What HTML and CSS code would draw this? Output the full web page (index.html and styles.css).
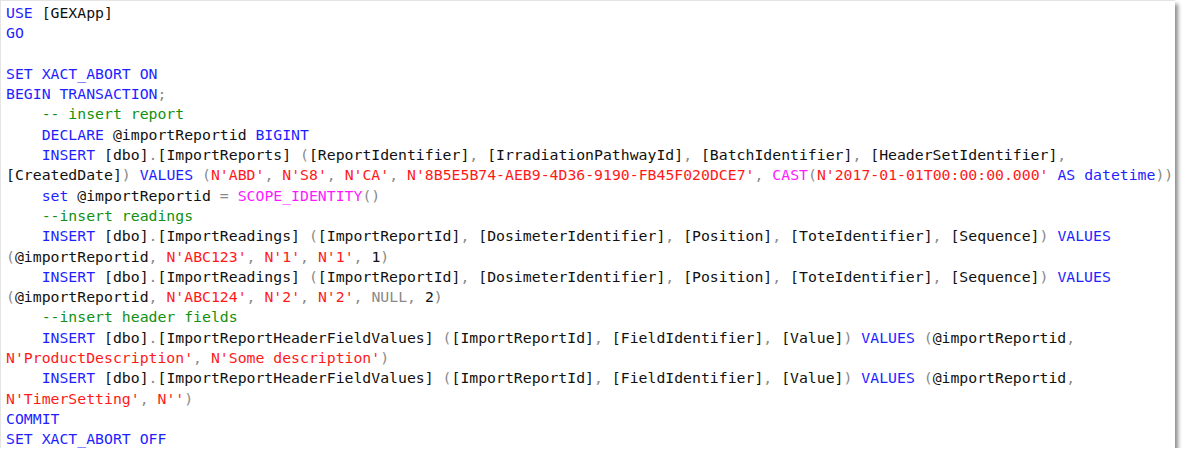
FILE: index.html
```html
<!DOCTYPE html>
<html>
<head>
<meta charset="utf-8">
<link rel="stylesheet" href="styles.css">
</head>
<body>
<div class="editor"><pre class="code"><span class="k">USE</span> [GEXApp]
<span class="k">GO</span>

<span class="k">SET XACT_ABORT ON</span>
<span class="k">BEGIN TRANSACTION</span><span class="g">;</span>
    <span class="c">-- insert report</span>
    <span class="k">DECLARE</span> @importReportid <span class="k">BIGINT</span>
    <span class="k">INSERT</span> [dbo]<span class="g">.</span>[ImportReports] <span class="g">(</span>[ReportIdentifier]<span class="g">,</span> [IrradiationPathwayId]<span class="g">,</span> [BatchIdentifier]<span class="g">,</span> [HeaderSetIdentifier]<span class="g">,</span>
[CreatedDate]<span class="g">)</span> <span class="k">VALUES</span> <span class="g">(</span><span class="s">N'ABD'</span><span class="g">,</span> <span class="s">N'S8'</span><span class="g">,</span> <span class="s">N'CA'</span><span class="g">,</span> <span class="s">N'8B5E5B74-AEB9-4D36-9190-FB45F020DCE7'</span><span class="g">,</span> <span class="f">CAST</span><span class="g">(</span><span class="s">N'2017-01-01T00:00:00.000'</span> <span class="k">AS</span> <span class="k">datetime</span><span class="g">))</span>
    <span class="k">set</span> @importReportid <span class="g">=</span> <span class="f">SCOPE_IDENTITY</span><span class="g">()</span>
    <span class="c">--insert readings</span>
    <span class="k">INSERT</span> [dbo]<span class="g">.</span>[ImportReadings] <span class="g">(</span>[ImportReportId]<span class="g">,</span> [DosimeterIdentifier]<span class="g">,</span> [Position]<span class="g">,</span> [ToteIdentifier]<span class="g">,</span> [Sequence]<span class="g">)</span> <span class="k">VALUES</span>
<span class="g">(</span>@importReportid<span class="g">,</span> <span class="s">N'ABC123'</span><span class="g">,</span> <span class="s">N'1'</span><span class="g">,</span> <span class="s">N'1'</span><span class="g">,</span> 1<span class="g">)</span>
    <span class="k">INSERT</span> [dbo]<span class="g">.</span>[ImportReadings] <span class="g">(</span>[ImportReportId]<span class="g">,</span> [DosimeterIdentifier]<span class="g">,</span> [Position]<span class="g">,</span> [ToteIdentifier]<span class="g">,</span> [Sequence]<span class="g">)</span> <span class="k">VALUES</span>
<span class="g">(</span>@importReportid<span class="g">,</span> <span class="s">N'ABC124'</span><span class="g">,</span> <span class="s">N'2'</span><span class="g">,</span> <span class="s">N'2'</span><span class="g">,</span> <span class="g">NULL</span><span class="g">,</span> 2<span class="g">)</span>
    <span class="c">--insert header fields</span>
    <span class="k">INSERT</span> [dbo]<span class="g">.</span>[ImportReportHeaderFieldValues] <span class="g">(</span>[ImportReportId]<span class="g">,</span> [FieldIdentifier]<span class="g">,</span> [Value]<span class="g">)</span> <span class="k">VALUES</span> <span class="g">(</span>@importReportid<span class="g">,</span>
<span class="s">N'ProductDescription'</span><span class="g">,</span> <span class="s">N'Some description'</span><span class="g">)</span>
    <span class="k">INSERT</span> [dbo]<span class="g">.</span>[ImportReportHeaderFieldValues] <span class="g">(</span>[ImportReportId]<span class="g">,</span> [FieldIdentifier]<span class="g">,</span> [Value]<span class="g">)</span> <span class="k">VALUES</span> <span class="g">(</span>@importReportid<span class="g">,</span>
<span class="s">N'TimerSetting'</span><span class="g">,</span> <span class="s">N''</span><span class="g">)</span>
<span class="k">COMMIT</span>
<span class="k">SET XACT_ABORT OFF</span></pre></div>
</body>
</html>
```

FILE: styles.css
```css
html, body {
  margin: 0;
  padding: 0;
  background: #ffffff;
}

.editor {
  box-sizing: border-box;
  width: 1175px;
  height: 448px;
  background: #ffffff;
  border-top: 1px solid #e4e4e4;
  border-left: 1px solid #e4e4e4;
  box-shadow: 3px 4px 4px rgba(0, 0, 0, 0.45);
  padding: 2px 0 0 5px;
  overflow: hidden;
}

.code {
  margin: 0;
  font-family: "DejaVu Sans Mono", "Liberation Mono", monospace;
  font-size: 14.8px;
  line-height: 20.29px;
  color: #111111;
  white-space: pre;
}

.k { color: #1f1fff; }
.s { color: #ff1a1a; }
.c { color: #119111; }
.g { color: #8a8a8a; }
.f { color: #ff1aff; }
```
